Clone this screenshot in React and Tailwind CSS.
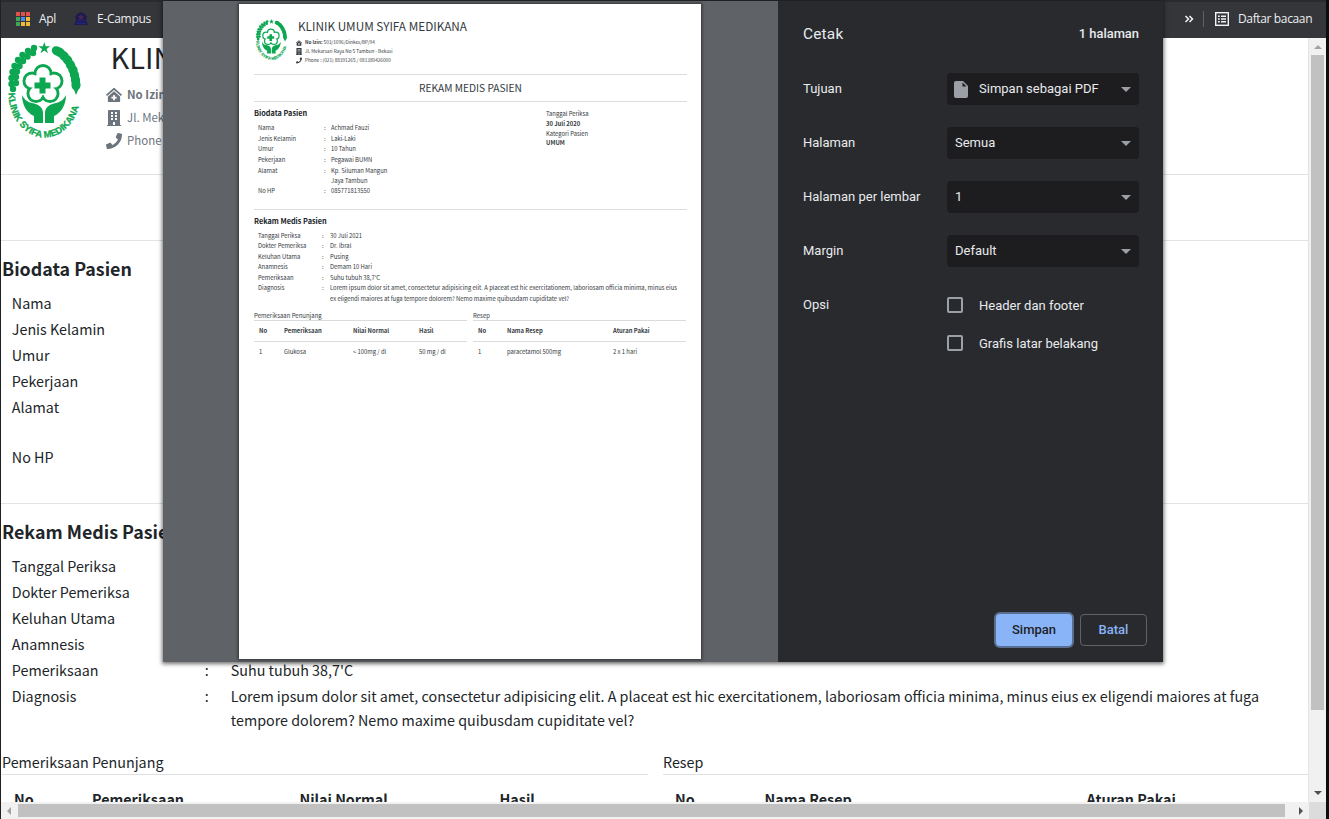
import { FaClinicMedical, FaBuilding, FaPhone } from "react-icons/fa";

const DIAGNOSIS =
  "Lorem ipsum dolor sit amet, consectetur adipisicing elit. A placeat est hic exercitationem, laboriosam officia minima, minus eius ex eligendi maiores at fuga tempore dolorem? Nemo maxime quibusdam cupiditate vel?";

const bio = [
  ["Nama", "Achmad Fauzi"],
  ["Jenis Kelamin", "Laki-Laki"],
  ["Umur", "10 Tahun"],
  ["Pekerjaan", "Pegawai BUMN"],
  ["Alamat", "Kp. Siluman Mangun Jaya Tambun"],
  ["No HP", "085771813550"],
];

const rekam = [
  ["Tanggal Periksa", "30 Juli 2021"],
  ["Dokter Pemeriksa", "Dr. Ibral"],
  ["Keluhan Utama", "Pusing"],
  ["Anamnesis", "Demam 10 Hari"],
  ["Pemeriksaan", "Suhu tubuh 38,7'C"],
  ["Diagnosis", DIAGNOSIS],
];

function Logo({ className, id }) {
  const petals = [
    [43, 37.5],
    [54, 45],
    [50, 57.5],
    [36, 57.5],
    [32, 45],
  ];
  const beads = [
    [34, 12], [28, 15], [22.5, 19], [18, 24], [14.5, 30], [12.5, 36], [11.5, 42], [11.5, 48], [13, 53],
    [33, 17], [27.5, 20.5], [23, 25], [19.5, 30], [17, 35.5], [16, 41], [16, 47],
  ];
  const leaves = [
    [57, 15, 28], [60, 16.5, 35], [64, 20, 45], [67.5, 24, 52], [70.5, 29, 60], [73, 34, 68], [74.5, 39, 76], [75.5, 44, 84], [76, 49, 92],
  ];
  return (
    <svg viewBox="1 2 89 104" className={className}>
      <g fill="#0ca750">
        <path d="M44.3 6l1.4 4.3h4.5l-3.6 2.7 1.4 4.3-3.7-2.7-3.7 2.7 1.4-4.3-3.6-2.7h4.5z" />
        {beads.map(([x, y]) => (
          <circle key={x + "-" + y} cx={x} cy={y} r="3.2" />
        ))}
        {leaves.map(([x, y, a]) => (
          <ellipse key={y} cx={x} cy={y} rx="5.4" ry="4.6" transform={`rotate(${a} ${x} ${y})`} />
        ))}
        <path d="M73 51l6 1-3 7z" />
        <path d="M22 59c2 4 5 7 10 8 6 1 11 4 11 10v10h-9v-7c-7-3-12-11-12-21z" />
        <path d="M66 59c-2 4-5 7-10 8-6 1-11 4-11 10v10h9v-7c7-3 12-11 12-21z" />
      </g>
      <g fill="#fff" stroke="#0ca750" strokeWidth="6">
        {petals.map(([x, y]) => (
          <circle key={x} cx={x} cy={y} r="6.5" />
        ))}
      </g>
      <g fill="#fff">
        {petals.map(([x, y]) => (
          <circle key={x} cx={x} cy={y} r="6.6" />
        ))}
        <circle cx="43" cy="48" r="11" />
      </g>
      <path fill="#0ca750" d="M39.500 41.500h6v5h5v6h-5v5h-6v-5h-5v-6h5z" />
      <path id={id} d="M8.500 57A36 44.500 0 0 0 80.500 57" fill="none" />
      <text className="font-['Liberation_Sans',sans-serif] font-bold" fontSize="9.3" fill="#0ca750" stroke="#0ca750" strokeWidth="0.3">
        <textPath href={"#" + id}>KLINIK SYIFA MEDIKANA</textPath>
      </text>
    </svg>
  );
}

function BookmarkBar() {
  const dots = [
    "bg-[#e2524a]", "bg-[#e2524a]", "bg-[#e2524a]",
    "bg-[#3fa65a]", "bg-[#4a8af0]", "bg-[#f0b93a]",
    "bg-[#3fa65a]", "bg-[#f0b93a]", "bg-[#f0b93a]",
  ];
  return (
    <header className="flex h-[38px] shrink-0 items-center border-t-2 border-[#2a2b2e] bg-[#35363a] pb-[2px] pl-[15px] pr-[14px] font-['Open_Sans',sans-serif] text-[12px] tracking-[-0.3px] text-[#eceef0]">
      <div className="grid grid-cols-3 gap-x-[1px] gap-y-[1px]">
        {dots.map((c, i) => (
          <span key={i} className={"h-[4px] w-[4px] " + c} />
        ))}
      </div>
      <span className="ml-[9px]">Apl</span>
      <svg viewBox="0 0 14 14" className="ml-[18px] h-[14px] w-[14px]">
        <path d="M7 0l4 2 2 3-1 3 2 5H0l2-5-1-3 2-3z" fill="#1d1b52" />
        <path d="M7 2l1 2h2L8.500 6l.5 2-2-1-2 1 .5-2L4 4h2z" fill="#45284f" />
        <path d="M3 9h8M2 11.500h10" stroke="#25247c" />
      </svg>
      <span className="ml-[9px]">E-Campus</span>
      <svg viewBox="0 0 10 8" className="ml-auto h-2 w-[10px]" fill="none" stroke="#f1f3f4" strokeWidth="1.500">
        <path d="M1.500 1l3 3-3 3M5.500 1l3 3-3 3" />
      </svg>
      <span className="ml-[9px] h-4 w-px bg-[#5f6165]" />
      <svg viewBox="0 0 14 14" className="ml-[11px] h-[14px] w-[14px]" fill="none" stroke="#f1f3f4" strokeWidth="1.400">
        <rect x=".7" y=".7" width="12.600" height="12.600" />
        <path d="M3 4.200h1.800M3 7h1.800M3 9.800h1.800M6 4.200h5M6 7h5M6 9.800h5" />
      </svg>
      <span className="ml-[9px] w-[74px] whitespace-nowrap tracking-[-0.36px]">Daftar bacaan</span>
    </header>
  );
}

function Rows({ rows }) {
  return (
    <div className="pl-[10.800px] pr-[40px] leading-6">
      {rows.map(([k, v]) => (
        <div key={k} className="flex py-px">
          <span className="w-[193px] shrink-0">{k}</span>
          {v && <span className="w-[26px] shrink-0">:</span>}
          {v && <span>{v}</span>}
        </div>
      ))}
    </div>
  );
}

function Page() {
  const labels = (rows) => rows.map(([k]) => [k]);
  return (
    <main className="min-w-0 flex-1 overflow-hidden bg-white font-['Noto_Sans_CJK_SC',sans-serif] text-[14.320px] text-[#212529]">
      <div className="flex h-[137px] border-b border-[#e2e3e4]">
        <Logo id="ring-page" className="h-[104px] w-[89px] shrink-0" />
        <div className="pl-[16px] whitespace-nowrap">
          <h1 className="mt-px h-[34px] pl-[4.500px] text-[29px] leading-[34px]">KLIN</h1>
          <div className="mt-[10px] text-[11.460px] leading-[23px] text-[#6c757d]">
            <p className="flex items-center"><FaClinicMedical className="mr-[5px] w-4 text-[14px]" /><b>No Izin</b></p>
            <p className="flex items-center"><FaBuilding className="mr-[5px] w-4 text-[16px]" />Jl. Mek</p>
            <p className="flex items-center"><FaPhone className="mr-[5px] w-4 text-[16px]" />Phone</p>
          </div>
        </div>
      </div>
      <div className="h-[66px] border-b border-[#e2e3e4]" />
      <section className="h-[263px] border-b border-[#e2e3e4] pt-[14px]">
        <h2 className="mb-[9px] pl-px text-[17.850px] font-bold leading-[26px]">Biodata Pasien</h2>
        <Rows rows={labels(bio.slice(0, 4))} />
        <div className="h-[50px]"><Rows rows={labels(bio.slice(4, 5))} /></div>
        <Rows rows={labels(bio.slice(5))} />
      </section>
      <section className="pt-[14px]">
        <h2 className="mb-[9px] pl-px text-[17.850px] font-bold leading-[26px]">Rekam Medis Pasien</h2>
        <Rows rows={labels(rekam.slice(0, 4))} />
        <Rows rows={rekam.slice(4)} />
      </section>
      <div className="mt-[17px] flex gap-[15px] pl-px">
        <div className="w-[646px] shrink-0">
          <p className="border-b border-[#dee0e2] leading-6">Pemeriksaan Penunjang</p>
          <div className="flex pl-3 pt-[12px] font-bold leading-6">
            <span className="w-[78px]">No</span>
            <span className="w-[207.500px]">Pemeriksaan</span>
            <span className="w-[200px]">Nilai Normal</span>
            <span>Hasil</span>
          </div>
        </div>
        <div className="w-[646px] shrink-0">
          <p className="border-b border-[#dee0e2] leading-6">Resep</p>
          <div className="flex pl-3 pt-[12px] font-bold leading-6">
            <span className="w-[89.500px]">No</span>
            <span className="w-[322px]">Nama Resep</span>
            <span>Aturan Pakai</span>
          </div>
        </div>
      </div>
    </main>
  );
}

function PreviewRow({ k, v, h, first, colon, leading }) {
  return (
    <div className={"flex " + h}>
      <span className={"shrink-0 " + first}>{k}</span>
      <span className={"shrink-0 " + colon}>:</span>
      <span className={leading}>{v}</span>
    </div>
  );
}

function PreviewTable({ title, head, cells, widths, pad }) {
  return (
    <div className="w-[213px]">
      <p className="h-[10px] border-b border-[#d9dcdf] text-[6px] leading-[9px]">{title}</p>
      <div className={"flex h-[21px] border-b border-[#d9dcdf] font-bold leading-[20px] " + pad}>
        {head.map((t, i) => <span key={t} className={widths[i]}>{t}</span>)}
      </div>
      <div className={"flex leading-[20px] " + pad}>
        {cells.map((t, i) => <span key={t} className={widths[i]}>{t}</span>)}
      </div>
    </div>
  );
}

function Preview() {
  return (
    <div className="flex w-[615px] shrink-0 justify-center bg-[#5f6267] pt-[3px] pr-px">
      <div className="h-[655px] w-[462px] bg-white pl-[15px] pr-[14px] font-['Noto_Sans_CJK_SC',sans-serif] text-[5.870px] text-[#343a40] shadow-[0_0_3px_1px_rgba(30,30,30,0.7)] whitespace-nowrap">
        <div className="flex h-[71px] border-b border-[#dadddf]">
          <Logo id="ring-preview" className="mt-[13px] h-[45px] w-[38px] -ml-px" />
          <div className="pl-[5px] pt-[13px]">
            <h1 className="pl-[2px] text-[11.770px] leading-[17px]">KLINIK UMUM SYIFA MEDIKANA</h1>
            <div className="mt-[4px] text-[4.720px] leading-[9px]">
              <p className="flex items-center"><FaClinicMedical className="mr-[3px] w-[6px] text-[6px]" /><b>No Izin:</b>&nbsp;503/1096/Dinkes/BP/94</p>
              <p className="flex items-center"><FaBuilding className="mr-[3px] w-[6px] text-[7px]" />Jl. Mekarsari Raya No 5 Tambun - Bekasi</p>
              <p className="flex items-center"><FaPhone className="mr-[3px] w-[6px] text-[7px]" />Phone : (021) 88391265 / 081380426000</p>
            </div>
          </div>
        </div>
        <div className="h-[27px] border-b border-[#dadddf] text-center text-[10.200px] leading-[26px]">REKAM MEDIS PASIEN</div>
        <div className="flex h-[108px] border-b border-[#dadddf] pt-[5px]">
          <div className="w-[292px]">
            <h2 className="h-[16px] text-[7.300px] font-bold leading-[12px] text-[#212529]">Biodata Pasien</h2>
            <div className="pl-1 leading-[10.700px]">
              {bio.map(([k, v]) => (
                <PreviewRow key={k} k={k} v={v} h={k === "Alamat" ? "h-[20px]" : "h-[10.700px]"} first="w-[66px]" colon="w-[7px]"
                  leading={k === "Alamat" ? "w-[62px] whitespace-normal leading-[9.600px] pt-[0.500px]" : ""} />
              ))}
            </div>
          </div>
          <div className="pt-[2px] leading-[9.800px]">
            <p>Tanggal Periksa</p>
            <p className="font-bold">30 Juli 2020</p>
            <p>Kategori Pasien</p>
            <p className="font-bold">UMUM</p>
          </div>
        </div>
        <h2 className="h-[20.500px] pt-[5px] text-[7.300px] font-bold leading-[12px] text-[#212529]">Rekam Medis Pasien</h2>
        <div className="pl-1 leading-[10.550px]">
          {rekam.map(([k, v]) => (
            <PreviewRow key={k} k={k} v={v} h={k === "Diagnosis" ? "h-[21px]" : "h-[10.550px]"} first="w-[64px]" colon="w-[8px]"
              leading={k === "Diagnosis" ? "w-[351px] whitespace-normal" : ""} />
          ))}
        </div>
        <div className="mt-[6.500px] flex gap-[6px]">
          <PreviewTable title="Pemeriksaan Penunjang" head={["No", "Pemeriksaan", "Nilai Normal", "Hasil"]} cells={["1", "Glukosa", "< 100mg / dl", "50 mg / dl"]}
            widths={["w-[25px]", "w-[69px]", "w-[66px]", ""]} pad="pl-[5px]" />
          <PreviewTable title="Resep" head={["No", "Nama Resep", "Aturan Pakai"]} cells={["1", "paracetamol 500mg", "2 x 1 hari"]}
            widths={["w-[29px]", "w-[106px]", ""]} pad="pl-[5px]" />
        </div>
      </div>
    </div>
  );
}

function Field({ label, value, icon }) {
  return (
    <div className="mb-[22px] flex h-8 items-center">
      <span className="w-36">{label}</span>
      <div className="flex h-8 w-48 items-center rounded bg-[#1d1d1f] pl-2 pr-2">
        {icon && (
          <svg viewBox="0 0 14 17" className="mr-[11px] -ml-px h-[17px] w-[14px]">
            <path d="M2 0h7l5 5v10a2 2 0 0 1-2 2H2a2 2 0 0 1-2-2V2a2 2 0 0 1 2-2z" fill="#9aa0a6" />
            <path d="M8.500 1.500v4h4z" fill="#1d1d1f" />
          </svg>
        )}
        <span>{value}</span>
        <svg viewBox="0 0 10 5" className="ml-auto h-[5px] w-[10px]"><path d="M0 0h10L5 5z" fill="#9aa0a6" /></svg>
      </div>
    </div>
  );
}

function Check({ label }) {
  return (
    <label className="mb-[6px] flex h-8 items-center gap-4">
      <span className="h-4 w-4 rounded-[2px] border-2 border-[#9aa0a6]" />
      <span className="pt-px">{label}</span>
    </label>
  );
}

function PrintDialog() {
  return (
    <div className="absolute left-[162px] top-px flex h-[661px] w-[1000px] shadow-[0_1px_4px_1px_rgba(0,0,0,0.55)]">
      <Preview />
      <div className="flex flex-1 flex-col bg-[#292a2d] pl-px font-['Roboto',sans-serif] text-[13px] text-[#e8eaed]">
        <div className="flex h-[72px] items-center justify-between pb-[7px] pl-6 pr-6">
          <h2 className="pt-[2px] text-[15.400px] tracking-[0.2px]">Cetak</h2>
          <span className="text-[12.900px] font-medium">1 halaman</span>
        </div>
        <div className="flex-1 pl-6">
          <Field label="Tujuan" value="Simpan sebagai PDF" icon />
          <Field label="Halaman" value="Semua" />
          <Field label="Halaman per lembar" value="1" />
          <Field label="Margin" value="Default" />
          <div className="flex">
            <span className="w-36 leading-[31px]">Opsi</span>
            <div>
              <Check label="Header dan footer" />
              <Check label="Grafis latar belakang" />
            </div>
          </div>
        </div>
        <div className="flex justify-end gap-2 p-4 font-medium">
          <button className="h-8 w-[76px] rounded bg-[#8ab4f8] text-[#202124] shadow-[0_0_0_2px_rgba(138,180,248,0.5)]">Simpan</button>
          <button className="h-8 w-[67px] rounded border border-[#5f6368] text-[#8ab4f8]">Batal</button>
        </div>
      </div>
    </div>
  );
}

export default function App() {
  return (
    <div className="relative flex h-[819px] w-[1329px] overflow-hidden border-l border-[#202124] bg-[#0c0d11]">
      <div className="flex w-[1325px] flex-col">
        <BookmarkBar />
        <div className="flex h-[764px]">
          <Page />
          <div className="flex w-[18px] shrink-0 flex-col items-center border-l border-[#e4e4e4] bg-[#f1f1f1]">
            <svg viewBox="0 0 8 4" className="mt-[7px] h-1 w-2"><path d="M4 0l4 4H0z" fill="#a3a3a3" /></svg>
            <div className="mt-[6px] h-[655px] w-[13px] bg-[#c1c1c1]" />
            <svg viewBox="0 0 8 4" className="mb-[7px] mt-auto h-1 w-2"><path d="M0 0h8L4 4z" fill="#505050" /></svg>
          </div>
        </div>
        <div className="flex h-[17px] items-center bg-[#f1f1f1]">
          <svg viewBox="0 0 4 8" className="ml-[6px] h-2 w-1"><path d="M4 0v8L0 4z" fill="#a3a3a3" /></svg>
          <div className="ml-[7px] h-[13px] w-[1267px] bg-[#c1c1c1]" />
          <svg viewBox="0 0 4 8" className="ml-[14px] h-2 w-1"><path d="M0 0v8l4-4z" fill="#505050" /></svg>
          <div className="ml-auto h-full w-[17px] bg-[#dcdcdc]" />
        </div>
      </div>
      <PrintDialog />
    </div>
  );
}
